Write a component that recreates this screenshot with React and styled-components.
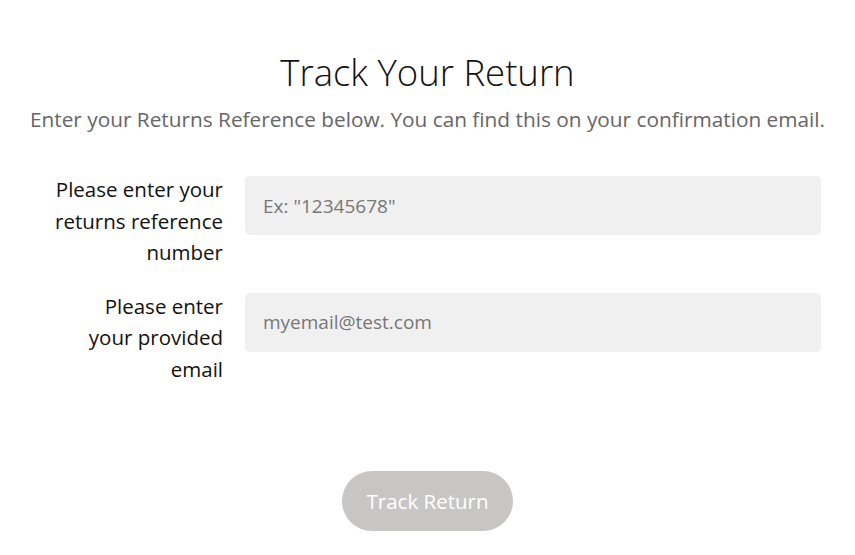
import React from "react";
import styled, { createGlobalStyle } from "styled-components";

const Global = createGlobalStyle`
  html, body { margin: 0; padding: 0; background: #fff; }
  body { font-family: "Open Sans", "Noto Sans", sans-serif; }
  * { box-sizing: border-box; }
`;

const Page = styled.main`
  width: 855px;
  padding: 48px 34px 0;
  display: flex;
  flex-direction: column;
  align-items: center;
`;

const Title = styled.h1`
  margin: 0;
  font-size: 36.5px;
  font-weight: 300;
  line-height: 48px;
  color: #111;
`;

const Subtitle = styled.p`
  margin: 8px 0 42px;
  font-size: 20.8px;
  line-height: 30px;
  color: #666;
  white-space: nowrap;
`;

const Form = styled.form`
  width: 100%;
  display: flex;
  flex-direction: column;
  gap: 22px;
`;

const Row = styled.div`
  display: grid;
  grid-template-columns: 189px 1fr;
  column-gap: 22px;
  align-items: start;
`;

const Label = styled.label`
  margin-top: -2px;
  margin-bottom: 2px;
  text-align: right;
  font-size: 20.5px;
  line-height: 31.5px;
  color: #111;
`;

const Input = styled.input`
  height: 59px;
  border: none;
  border-radius: 5px;
  background: #f0f0f0;
  padding: 0 18px;
  font-family: inherit;
  font-size: 19px;
  color: #333;
  outline: none;
  &::placeholder { color: #777; }
`;

const Actions = styled.div`
  display: flex;
  justify-content: center;
  margin-top: 84px;
`;

const Button = styled.button`
  width: 171px;
  height: 60px;
  border: none;
  border-radius: 30px;
  background: #c8c6c5;
  color: #fff;
  font-family: inherit;
  font-size: 20.5px;
  font-weight: 500;
  cursor: not-allowed;
`;

export default function App() {
  return (
    <>
      <Global />
      <Page>
        <Title>Track Your Return</Title>
        <Subtitle>Enter your Returns Reference below. You can find this on your confirmation email.</Subtitle>
        <Form onSubmit={(e) => e.preventDefault()}>
          <Row>
            <Label htmlFor="ref">Please enter your returns reference number</Label>
            <Input id="ref" placeholder='Ex: "12345678"' />
          </Row>
          <Row>
            <Label htmlFor="email">Please enter<br />your provided<br />email</Label>
            <Input id="email" placeholder="myemail@test.com" />
          </Row>
        </Form>
        <Actions>
          <Button type="submit" disabled>Track Return</Button>
        </Actions>
      </Page>
    </>
  );
}
